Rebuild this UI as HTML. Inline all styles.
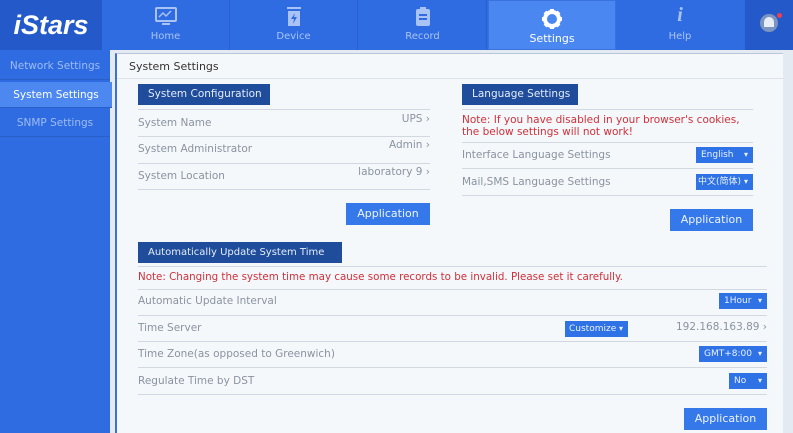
<!DOCTYPE html>
<html><head><meta charset="utf-8"><style>
*{margin:0;padding:0;box-sizing:border-box}
body{width:793px;height:433px;overflow:hidden;background:#e4eaf2;font-family:"DejaVu Sans","Liberation Sans","Noto Sans CJK SC",sans-serif;font-size:10.5px;color:#8a93a0;position:relative}
.a{position:absolute;white-space:nowrap}
#top{left:0;top:0;width:793px;height:50px;background:#2f6ce2}
.tab{top:0;height:50px;width:128px;text-align:center;color:#a9c4f4;font-size:10px;border-right:1px solid #2a60cc}
.tab span{position:absolute;left:0;right:0;top:31px}
.tab .ic{position:absolute;left:50%;transform:translateX(-50%);top:7px}
#side{left:0;top:50px;width:110px;height:383px;background:#2f6ce2}
.si{left:0;width:110px;height:27px;line-height:27px;text-align:center;color:#9ebcf2;font-size:10.5px;border-bottom:1px solid #2a5fc8}
#panel{left:115px;top:53px;width:668px;height:380px;background:#f5f8fb;border-left:2px solid #3a70d8;border-top:1px solid #b8c6dc}
.hd{background:#1f4d9c;color:#e4ecf8;font-size:10.5px;height:21px;line-height:21px;padding-left:10px}
.ln{height:1px;background:#d2d8e0}
.red{color:#d0303a;font-size:10.5px}
.btn{background:#3478ea;color:#eef4ff;text-align:center;font-size:11px;line-height:22px;height:22px}
.sel{background:#2f72e6;color:#eaf2ff;font-size:9px;height:16px;line-height:16px;padding-left:5px}
.sel:after{content:"▾";position:absolute;right:5px;font-size:8px}
.r{text-align:right}
</style></head><body>
<div id="top" class="a"></div>
<div class="a" style="left:0;top:0;width:102px;height:50px;background:#2359c9;color:#fff;font:italic bold 27px 'Liberation Sans',sans-serif;line-height:50px;text-align:center">iStars</div>
<div class="a tab" style="left:102px"><svg class="ic" width="22" height="20" viewBox="0 0 22 20"><rect x="1" y="1" width="20" height="13" rx="1" fill="none" stroke="#a9c4f4" stroke-width="2"/><path d="M4 10l4-4 3 3 5-5" stroke="#a9c4f4" fill="none" stroke-width="1.5"/><rect x="7" y="16" width="8" height="2" fill="#a9c4f4"/></svg><span>Home</span></div>
<div class="a tab" style="left:230px"><svg class="ic" width="16" height="20" viewBox="0 0 16 20"><rect x="1" y="0" width="14" height="2" fill="#a9c4f4"/><rect x="2" y="4" width="12" height="15" fill="#a9c4f4"/><path d="M9 6l-4 6h3l-1 5 4-7H8z" fill="#2f6ce2"/></svg><span>Device</span></div>
<div class="a tab" style="left:359px"><svg class="ic" width="16" height="20" viewBox="0 0 16 20"><rect x="1" y="2" width="14" height="17" rx="2" fill="#a9c4f4"/><rect x="5" y="0" width="6" height="4" fill="#a9c4f4"/><rect x="4" y="7" width="8" height="2" fill="#2f6ce2"/><rect x="4" y="11" width="8" height="2" fill="#2f6ce2"/></svg><span>Record</span></div>
<div class="a tab" style="left:488px;background:#4b87f0;height:50px;border:1px solid #3a72dc;color:#fff"><svg class="ic" width="22" height="22" viewBox="0 0 22 22"><circle cx="11" cy="11" r="7" fill="none" stroke="#fff" stroke-width="4"/><g stroke="#fff" stroke-width="4"><path d="M11 1v4M11 17v4M1 11h4M17 11h4M4 4l3 3M15 15l3 3M4 18l3-3M15 7l3-3"/></g></svg><span style="font-size:11px">Settings</span></div>
<div class="a tab" style="left:616px;border:none"><div class="ic" style="color:#a9c4f4;font:italic bold 20px 'Liberation Serif',serif;top:4px">i</div><span>Help</span></div>
<div class="a" style="left:745px;top:0;width:48px;height:50px;background:#2359c9"><div class="a" style="left:15px;top:14px;width:18px;height:18px;border-radius:50%;background:#7c95c0"></div><div class="a" style="left:19px;top:17px;width:10px;height:10px;border-radius:5px 5px 0 0;background:#e8eef8"></div><div class="a" style="left:32px;top:13px;width:5px;height:5px;border-radius:50%;background:#f04050"></div></div>
<div id="side" class="a"></div>
<div class="a si" style="top:53px">Network Settings</div>
<div class="a si" style="top:82px;background:#4c88f0;color:#fff;width:112px;height:26px;line-height:26px">System Settings</div>
<div class="a si" style="top:110px">SNMP Settings</div>
<div id="panel" class="a"></div>
<div class="a" style="left:129px;top:60px;color:#333;font-size:11px">System Settings</div>
<div class="a ln" style="left:117px;top:78px;width:666px;background:#dde3eb"></div>

<div class="a hd" style="left:138px;top:84px;width:132px">System Configuration</div>
<div class="a ln" style="left:138px;top:109px;width:292px"></div>
<div class="a" style="left:138px;top:117px">System Name</div><div class="a r" style="left:300px;top:113px;width:130px">UPS ›</div>
<div class="a ln" style="left:138px;top:136px;width:292px"></div>
<div class="a" style="left:138px;top:143px">System Administrator</div><div class="a r" style="left:300px;top:139px;width:130px">Admin ›</div>
<div class="a ln" style="left:138px;top:163px;width:292px"></div>
<div class="a" style="left:138px;top:170px">System Location</div><div class="a r" style="left:300px;top:166px;width:130px">laboratory 9 ›</div>
<div class="a ln" style="left:138px;top:189px;width:292px"></div>
<div class="a btn" style="left:346px;top:203px;width:84px">Application</div>

<div class="a hd" style="left:462px;top:84px;width:116px">Language Settings</div>
<div class="a ln" style="left:462px;top:109px;width:291px"></div>
<div class="a red" style="left:462px;top:114px;line-height:12px">Note: If you have disabled in your browser's cookies,<br>the below settings will not work!</div>
<div class="a ln" style="left:462px;top:142px;width:291px"></div>
<div class="a" style="left:462px;top:149px">Interface Language Settings</div><div class="a sel" style="left:696px;top:147px;width:57px">English</div>
<div class="a ln" style="left:462px;top:168px;width:291px"></div>
<div class="a" style="left:462px;top:176px">Mail,SMS Language Settings</div><div class="a sel" style="left:696px;top:174px;width:57px;padding-left:2px">中文(简体)</div>
<div class="a ln" style="left:462px;top:195px;width:291px"></div>
<div class="a btn" style="left:670px;top:209px;width:83px">Application</div>

<div class="a hd" style="left:138px;top:242px;width:204px;font-size:10px">Automatically Update System Time</div>
<div class="a ln" style="left:138px;top:266px;width:629px"></div>
<div class="a red" style="left:138px;top:271px;font-size:10.3px">Note: Changing the system time may cause some records to be invalid. Please set it carefully.</div>
<div class="a ln" style="left:138px;top:289px;width:629px"></div>
<div class="a" style="left:138px;top:295px">Automatic Update Interval</div><div class="a sel" style="left:719px;top:293px;width:48px">1Hour</div>
<div class="a ln" style="left:138px;top:315px;width:629px"></div>
<div class="a" style="left:138px;top:322px">Time Server</div><div class="a sel" style="left:565px;top:321px;width:63px;font-size:9px;padding-left:4px">Customize</div><div class="a r" style="left:620px;top:321px;width:147px">192.168.163.89 ›</div>
<div class="a ln" style="left:138px;top:341px;width:629px"></div>
<div class="a" style="left:138px;top:348px">Time Zone(as opposed to Greenwich)</div><div class="a sel" style="left:699px;top:346px;width:68px">GMT+8:00</div>
<div class="a ln" style="left:138px;top:367px;width:629px"></div>
<div class="a" style="left:138px;top:375px">Regulate Time by DST</div><div class="a sel" style="left:729px;top:373px;width:38px">No</div>
<div class="a ln" style="left:138px;top:394px;width:629px"></div>
<div class="a btn" style="left:684px;top:408px;width:83px">Application</div>
</body></html>
